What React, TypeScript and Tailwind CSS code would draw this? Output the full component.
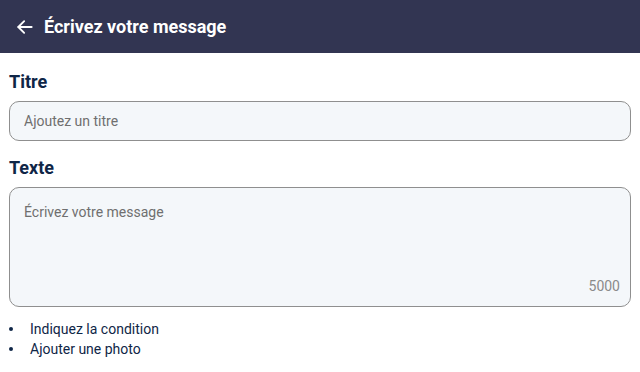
import React, { useState } from 'react';

function App() {
  const [titre, setTitre] = useState('');
  const [texte, setTexte] = useState('');

  return (
    <div className="w-[640px] h-[372px] bg-white font-['Roboto',sans-serif] overflow-hidden">
      {/* header */}
      <div className="h-[53px] bg-[#323552] flex items-center pl-[15px]">
        <svg width="20" height="20" viewBox="0 0 24 24" fill="none" stroke="white" strokeWidth="2.2" strokeLinecap="round" strokeLinejoin="round">
          <path d="M20 12H4" />
          <path d="M11 5l-7 7 7 7" />
        </svg>
        <h1 className="ml-[9px] text-white text-[18px] font-bold leading-none">Écrivez votre message</h1>
      </div>

      <div className="px-[9px]">
        <label className="block mt-[18px] text-[18px] font-bold text-[#0f2647] leading-[22px]">Titre</label>
        <input
          value={titre}
          onChange={(e) => setTitre(e.target.value)}
          placeholder="Ajoutez un titre"
          className="mt-[8px] w-[622px] h-[40px] rounded-[10px] border border-[#8f8f8f] bg-[#f4f7fa] px-[14px] text-[14px] text-[#333] placeholder:text-[#6f6f6f] outline-none"
        />

        <label className="block mt-[16px] text-[18px] font-bold text-[#0f2647] leading-[22px]">Texte</label>
        <div className="relative mt-[8px] w-[622px] h-[120px] rounded-[10px] border border-[#8f8f8f] bg-[#f4f7fa]">
          <textarea
            value={texte}
            onChange={(e) => setTexte(e.target.value)}
            placeholder="Écrivez votre message"
            className="w-full h-full resize-none bg-transparent pt-[14px] px-[14px] text-[14px] text-[#333] placeholder:text-[#6f6f6f] outline-none"
          />
          <span className="absolute right-[10px] bottom-[9px] text-[14px] text-[#8a8a8a]">{5000 - texte.length}</span>
        </div>

        <ul className="mt-[12px] text-[14px] text-[#0f2647] leading-[20px]">
          <li className="flex items-center">
            <span className="w-[4px] h-[4px] rounded-full bg-[#0f2647] mr-[17px]"></span>
            Indiquez la condition
          </li>
          <li className="flex items-center">
            <span className="w-[4px] h-[4px] rounded-full bg-[#0f2647] mr-[17px]"></span>
            Ajouter une photo
          </li>
        </ul>
      </div>
    </div>
  );
}

export default App;
